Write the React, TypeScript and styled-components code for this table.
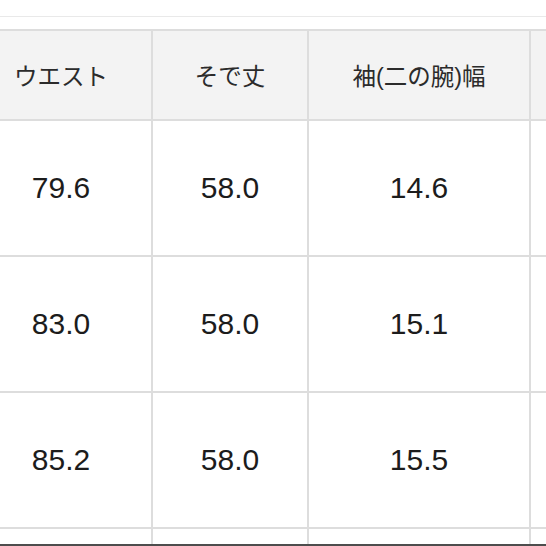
import React from "react";
import styled, { createGlobalStyle } from "styled-components";

const Global = createGlobalStyle`
  html, body { margin: 0; padding: 0; background: #ffffff; }
  body { width: 546px; height: 546px; overflow: hidden; }
`;

const Page = styled.div`
  width: 546px;
  height: 546px;
  display: flex;
  flex-direction: column;
  overflow: hidden;
  background: #ffffff;
`;

const TopRule = styled.div`
  margin-top: 16px;
  height: 1px;
  background: #e9e9e9;
  flex: none;
`;

const TableClip = styled.div`
  margin-top: 12px;
  height: 515px;
  overflow: hidden;
  flex: none;
`;

const Table = styled.table`
  border-collapse: collapse;
  table-layout: fixed;
  width: 660px;
  margin-left: -31px;
`;

const Col = styled.col<{ $w: number }>`
  width: ${(p) => p.$w}px;
`;

const HeadCell = styled.th`
  height: 88px;
  padding: 0;
  background: #f3f3f3;
  border: 2px solid #dddddd;
  color: #2b2b2b;
  font-family: "Liberation Sans", "Noto Sans CJK JP", sans-serif;
  font-size: 23.5px;
  font-weight: 400;
  text-align: center;
  vertical-align: middle;
`;

const Cell = styled.td`
  height: 134px;
  padding: 0;
  background: #ffffff;
  border: 2px solid #dddddd;
  color: #1c1c1c;
  font-family: "Liberation Sans", Arial, sans-serif;
  font-size: 30px;
  text-align: center;
  vertical-align: middle;
`;

const BottomRule = styled.div`
  height: 2px;
  background: #4d4d4d;
  flex: none;
`;

const widths = [182, 156, 222, 100];
const headers = ["ウエスト", "そで丈", "袖(二の腕)幅", ""];
const rows = [
  ["79.6", "58.0", "14.6", ""],
  ["83.0", "58.0", "15.1", ""],
  ["85.2", "58.0", "15.5", ""],
  ["", "", "", ""],
];

export default function App() {
  return (
    <Page>
      <Global />
      <TopRule />
      <TableClip>
        <Table>
          <colgroup>
            {widths.map((w, i) => (
              <Col key={i} $w={w} />
            ))}
          </colgroup>
          <thead>
            <tr>
              {headers.map((h, i) => (
                <HeadCell key={i}>{h}</HeadCell>
              ))}
            </tr>
          </thead>
          <tbody>
            {rows.map((r, i) => (
              <tr key={i}>
                {r.map((c, j) => (
                  <Cell key={j}>{c}</Cell>
                ))}
              </tr>
            ))}
          </tbody>
        </Table>
      </TableClip>
      <BottomRule />
    </Page>
  );
}
